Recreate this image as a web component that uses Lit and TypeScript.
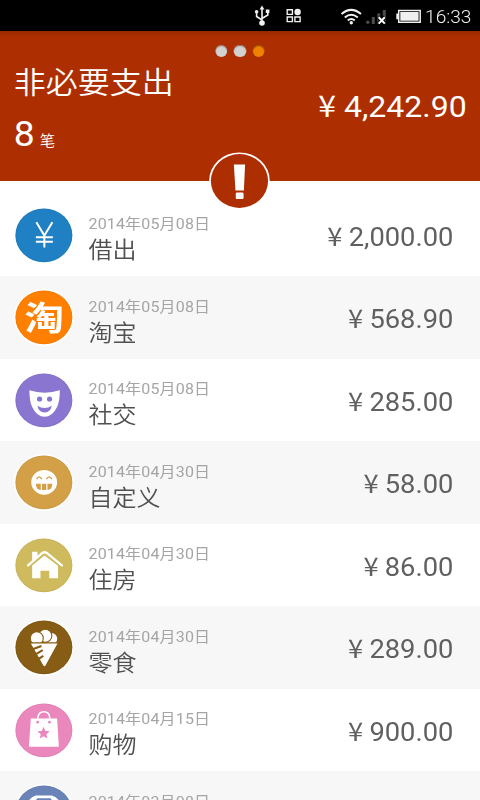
import { LitElement, html, svg, css, SVGTemplateResult } from "lit";
import { customElement, property } from "lit/decorators.js";

interface Entry {
  icon: string;
  color: string;
  date: string;
  name: string;
  amount: string;
}

const ENTRIES: Entry[] = [
  { icon: "yen", color: "#1f80c3", date: "2014年05月08日", name: "借出", amount: "2,000.00" },
  { icon: "tao", color: "#ff8000", date: "2014年05月08日", name: "淘宝", amount: "568.90" },
  { icon: "mask", color: "#8a75d1", date: "2014年05月08日", name: "社交", amount: "285.00" },
  { icon: "grin", color: "#d3a047", date: "2014年04月30日", name: "自定义", amount: "58.00" },
  { icon: "house", color: "#d0ba5e", date: "2014年04月30日", name: "住房", amount: "86.00" },
  { icon: "cone", color: "#875c14", date: "2014年04月30日", name: "零食", amount: "289.00" },
  { icon: "bag", color: "#ea88bd", date: "2014年04月15日", name: "购物", amount: "900.00" },
  { icon: "bus", color: "#6b84b8", date: "2014年03月08日", name: "", amount: "" },
];

const GLYPHS: Record<string, (c: string) => SVGTemplateResult> = {
  yen: () => svg`<path d="M22.5 15.2L30.5 28.6L38.5 15.2M30.5 28V40.4M22 30.2H39M22 34.7H39" fill="none" stroke="#fff" stroke-width="2"/>`,
  tao: () => svg`<text class="tao" x="30.3" y="40.6" text-anchor="middle" textLength="39.5" lengthAdjust="spacingAndGlyphs" fill="#fff">淘</text>`,
  mask: (c) => svg`
    <path d="M15.5 18.3Q30.7 23.2 46 18.3Q46 29 43.2 35Q38.5 44.8 30.7 44.8Q23 44.8 18.3 35Q15.5 29 15.5 18.3Z" fill="#fff"/>
    <circle cx="25.7" cy="27" r="2.6" fill=${c}/><circle cx="35.7" cy="27" r="2.6" fill=${c}/>
    <path d="M23.5 33.8Q30.7 38.4 38 33.8Q36.5 40.4 30.7 40.4Q25 40.4 23.5 33.8Z" fill=${c}/>`,
  grin: (c) => svg`
    <ellipse cx="30.3" cy="28.3" rx="12.9" ry="12.4" fill="#fff"/>
    <path d="M22.6 25.2Q25.3 20.6 28 25.2M32.6 25.2Q35.3 20.6 38 25.2" fill="none" stroke=${c} stroke-width="1.4"/>
    <path d="M22 29.8H38.4Q38.4 36 33.4 36H27Q22 36 22 29.8Z" fill=${c}/>
    <path d="M27.5 29.5V36.5M33 29.5V36.5" stroke="#fff" stroke-width="1.2"/>`,
  house: (c) => svg`
    <path d="M18.3 28.5L30.6 18.6L44.2 28.8V41.3H35.4V33.8H26.6V41.3H18.3Z" fill="#fff"/>
    <path d="M14 28.9L28.2 16.8Q30.7 14.8 33.2 16.8L48 28.9" fill="none" stroke=${c} stroke-width="4.4"/>
    <path d="M18.3 14.7H23.6V20L18.3 24.6Z" fill="#fff"/>
    <path d="M14.2 28.4L28.2 16.2Q30.7 14.2 33.2 16.2L48 28.4" fill="none" stroke="#fff" stroke-width="2.3" stroke-linecap="round"/>`,
  cone: (c) => svg`
    <circle cx="37.6" cy="19.8" r="5.8" fill="#fff"/>
    <circle cx="31.4" cy="16.8" r="6.6" fill="#fff" stroke=${c} stroke-width="1.1"/>
    <circle cx="22.9" cy="19.2" r="6.5" fill="#fff" stroke=${c} stroke-width="1.1"/>
    <path d="M14 23.2H46V30H14Z" fill=${c}/>
    <path d="M17 24.4H43.6L31.6 46.4Q30.4 48 29.4 46.2Z" fill="#fff"/>
    <path d="M17.4 30.8L27.6 26.9M20 36.3L28.8 31.2M23 41.2L29.4 36.8" stroke=${c} stroke-width="2.1"/>`,
  bag: (c) => svg`
    <path d="M17 16.5H43.2L45 44.8H15Z" fill="#fff"/>
    <path d="M23.8 19V16.5Q24.4 9.8 30 9.8Q35.6 9.8 36 16.5V19" fill="none" stroke="#fff" stroke-width="1.6"/>
    <circle cx="23.8" cy="20.2" r="1.4" fill=${c}/><circle cx="35.6" cy="20.2" r="1.4" fill=${c}/>
    <path d="M29.7 24.8L31.5 29L36 29.3L32.5 32.2L33.6 36.6L29.7 34.2L25.8 36.6L26.9 32.2L23.4 29.3L27.9 29Z" fill=${c}/>`,
  bus: (c) => svg`
    <path d="M22 11.4H38Q42.5 12.5 45 16.5V44H15V16.5Q17.5 12.5 22 11.4Z" fill="#fff"/>
    <path d="M23.3 14.2H36.8L38.5 17V30H21.6V17Z" fill=${c}/>`,
};

@customElement("category-icon")
class CategoryIcon extends LitElement {
  @property() icon = "yen";
  @property() color = "#000";
  static styles = css`
    :host { display: block; width: 56.25px; height: 57px; flex: none; }
    svg { display: block; width: 100%; height: 100%; }
    .tao { font: 700 33px "Noto Sans CJK SC", sans-serif; }
  `;
  render() {
    return html`<svg viewBox="0 0 60 57" preserveAspectRatio="none">
      <ellipse cx="30" cy="28.5" rx="30" ry="28.5" fill="#fff"/>
      <ellipse cx="30" cy="28.3" rx="28.5" ry="26.9" fill=${this.color} />
      <ellipse cx="30" cy="28.3" rx="28" ry="26.4" fill="none" stroke="#000" stroke-opacity=".04" stroke-width="1"/>
      ${GLYPHS[this.icon](this.color)}
    </svg>`;
  }
}

@customElement("app-root")
class AppRoot extends LitElement {
  static styles = css`
    :host { display: block; width: 480px; height: 800px; overflow: hidden; background: #fff; }
    /* 450 units wide, stretched across the 480px screen */
    .stage {
      width: 450px; height: 800px; overflow: hidden; display: flex; flex-direction: column;
      transform: scaleX(1.066667); transform-origin: 0 0;
      font-family: Roboto, "Noto Sans CJK SC", sans-serif;
    }
    .status { height: 31px; flex: none; background: #000; color: #f0f0f0; display: flex; }
    .status svg { width: 396px; height: 31px; flex: none; }
    .clock { font-size: 17.9px; font-weight: 300; line-height: 34px; padding-left: 2.5px; white-space: nowrap; }
    .header {
      position: relative; height: 150px; flex: none; box-sizing: border-box; color: #fff;
      background: linear-gradient(#982900, #ad2e00 6px); display: flex; flex-direction: column;
    }
    .dots { display: flex; justify-content: center; gap: 6.2px; padding-top: 14px; height: 12.5px; }
    .dot { width: 11.2px; height: 12px; border-radius: 50%; background: #d2d2d2; box-shadow: inset 0 1px 1px #8d6a5e; }
    .dot.on { background: #ef8200; box-shadow: inset 0 1px 1px #8a4600; }
    .summary { display: flex; justify-content: space-between; padding: 3.5px 12.5px 0 13px; }
    .title { font-size: 30px; line-height: 44px; font-weight: 350; }
    .count { display: flex; align-items: baseline; gap: 4.5px; font-size: 35px; line-height: 60px; }
    .unit { font-size: 14.5px; font-weight: 350; }
    .total { font-size: 30px; line-height: 36px; padding-top: 28px; white-space: nowrap; }
    .total .yen { margin-right: 7.6px; }
    .badge { position: absolute; left: 196px; top: 121px; width: 57px; height: 58px; z-index: 1; }
    .list { padding-top: 12.5px; }
    .row { display: flex; align-items: center; height: 82.5px; padding: 0 25px 0 13.125px; }
    .row.alt { background: #f7f7f7; }
    .row category-icon { margin-top: 1px; }
    .info { flex: 1; padding: 11px 0 0 13.6px; }
    .date { font-size: 15px; line-height: 20px; letter-spacing: 0.15px; color: #a5a5a5; }
    .name { font-size: 22.5px; line-height: 32px; height: 32px; color: #505050; font-weight: 350; }
    .amount { font-size: 25.6px; line-height: 32px; padding-top: 4px; color: #606060; white-space: nowrap; }
    .yen { font-family: "Noto Sans CJK SC", sans-serif; line-height: 1; margin-right: 5.8px; }
  `;
  render() {
    return html`<div class="stage">
      <div class="status">
        <svg viewBox="0 0 422.4 31" preserveAspectRatio="none">
          <g fill="none" stroke="#f0f0f0" stroke-width="1.6">
            <path d="M262 8V23M262 20L256.6 16.5V12M262 18.5L267.8 15V11.5"/>
            <path d="M287.2 9.8h5.2v4.6h-5.2zM287.2 17h5.2v4.6h-5.2zM294.9 17h5.2v4.6h-5.2z" stroke-width="1.4"/>
            <path d="M341.5 14Q351.2 5.8 361 14M344.8 17.4Q351.2 12 357.8 17.4M347.8 20.4Q351.2 17.6 354.8 20.4" stroke-width="2"/>
            <path d="M398.7 10.5H420.2V22.3H398.7z" stroke-width="1.5"/>
          </g>
          <g fill="#f0f0f0">
            <path d="M262 5.6L264.4 9.6H259.6zM265.8 9.6h3.6v3.4h-3.6z"/>
            <circle cx="256.6" cy="11.8" r="1.8"/><circle cx="262" cy="23" r="2.8"/>
            <circle cx="297.6" cy="12" r="3.2"/><circle cx="351.3" cy="22.8" r="1.7"/>
            <path d="M400.3 12.1H418.6V20.7H400.3zM396.3 13.6h2v5.6h-2z"/>
          </g>
          <g fill="#4b4b4b">
            <circle cx="367.8" cy="22.3" r="1.7"/><rect x="371.8" y="17" width="3" height="7"/>
            <rect x="377.3" y="13.4" width="3" height="10.6"/><rect x="382.8" y="10" width="3" height="14"/>
          </g>
          <path d="M378.5 17L385 23.8M385 17L378.5 23.8" stroke="#000" stroke-width="4"/>
          <path d="M378.7 17.2L384.8 23.6M384.8 17.2L378.7 23.6" stroke="#fff" stroke-width="2"/>
        </svg>
        <div class="clock">16:33</div>
      </div>
      <div class="header">
        <div class="dots"><div class="dot"></div><div class="dot"></div><div class="dot on"></div></div>
        <div class="summary">
          <div>
            <div class="title">非必要支出</div>
            <div class="count">8<span class="unit">笔</span></div>
          </div>
          <div class="total"><span class="yen">¥</span>4,242.90</div>
        </div>
        <svg class="badge" viewBox="0 0 60.8 58" preserveAspectRatio="none">
          <ellipse cx="30.4" cy="29" rx="30.4" ry="28.6" fill="#fff"/>
          <ellipse cx="30.4" cy="29" rx="28.6" ry="26.9" fill="#ad2e00"/>
          <path d="M24.8 12.4H36L34.8 38.5H26.4Z" fill="#fff"/>
          <rect x="26.7" y="40.5" width="7.8" height="6.4" rx="1.2" fill="#fff"/>
        </svg>
      </div>
      <div class="list">
        ${ENTRIES.map((e, i) => html`<div class="row ${i % 2 ? "alt" : ""}">
          <category-icon .icon=${e.icon} .color=${e.color}></category-icon>
          <div class="info"><div class="date">${e.date}</div><div class="name">${e.name}</div></div>
          ${e.amount ? html`<div class="amount"><span class="yen">¥</span>${e.amount}</div>` : ""}
        </div>`)}
      </div>
    </div>`;
  }
}
